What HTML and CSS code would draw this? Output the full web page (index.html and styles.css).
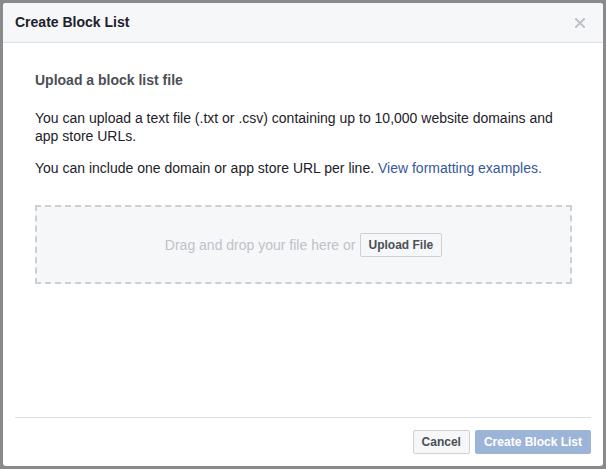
FILE: index.html
```html
<!DOCTYPE html>
<html>
<head>
<meta charset="utf-8">
<link rel="stylesheet" href="styles.css">
</head>
<body>
<div class="modal">
  <div class="header">
    <div class="title">Create Block List</div>
    <svg class="close" width="10" height="10" viewBox="0 0 10 10"><path d="M1 1L9 9M9 1L1 9" stroke="#bec2c9" stroke-width="2" stroke-linecap="square"/></svg>
  </div>
  <div class="content">
    <div class="subtitle">Upload a block list file</div>
    <p class="p1">You can upload a text file (.txt or .csv) containing up to 10,000 website domains and app store URLs.</p>
    <p class="p2">You can include one domain or app store URL per line. <a class="link">View formatting examples.</a></p>
    <div class="drop">
      <span class="droptext">Drag and drop your file here or</span>
      <button class="btn">Upload File</button>
    </div>
  </div>
  <div class="footer">
    <button class="btn">Cancel</button>
    <button class="btn primary">Create Block List</button>
  </div>
</div>
</body>
</html>
```
FILE: styles.css
```css
html, body { margin: 0; padding: 0; }
body {
  background: #8a8a8a;
  width: 606px;
  height: 469px;
  padding: 3px;
  box-sizing: border-box;
  font-family: "Liberation Sans", Arial, sans-serif;
  font-size: 14px;
  color: #1d2129;
}
.modal {
  width: 600px;
  height: 463px;
  background: #fff;
  border-radius: 3px;
  display: flex;
  flex-direction: column;
  overflow: hidden;
}
.header {
  height: 39px;
  background: #f6f7f9;
  border-bottom: 1px solid #dddfe2;
  display: flex;
  align-items: center;
  justify-content: space-between;
  padding: 0 18px 0 12px;
  flex-shrink: 0;
}
.title {
  font-weight: bold;
  font-size: 14px;
  color: #1d2129;
  margin-top: -2px;
}
.close { display: block; }
.content {
  flex: 1;
  padding: 28px 31px 0 32px;
}
.subtitle {
  font-weight: bold;
  color: #4b4f56;
  line-height: 18px;
}
p { margin: 0; line-height: 18px; }
.p1 { margin-top: 20px; }
.p2 { margin-top: 14px; }
.link { color: #365899; cursor: pointer; }
.drop {
  margin-top: 28px;
  height: 75px;
  border: 2px dashed #ccd0d5;
  background: #f6f7f9;
  display: flex;
  align-items: center;
  justify-content: center;
  gap: 4px;
}
.droptext { color: #bec2c9; font-size: 14px; }
.btn {
  font-family: "Liberation Sans", Arial, sans-serif;
  font-weight: bold;
  font-size: 12px;
  height: 24px;
  padding: 0 8px;
  border: 1px solid #ced0d4;
  border-radius: 2px;
  background: #f6f7f9;
  color: #4b4f56;
  line-height: 22px;
}
.footer {
  margin: 0 12px;
  border-top: 1px solid #dddfe2;
  padding: 12px 0 12px;
  display: flex;
  justify-content: flex-end;
  gap: 5px;
}
.primary {
  background: #9cb4d8;
  border-color: #9cb4d8;
  color: #fff;
}
```
